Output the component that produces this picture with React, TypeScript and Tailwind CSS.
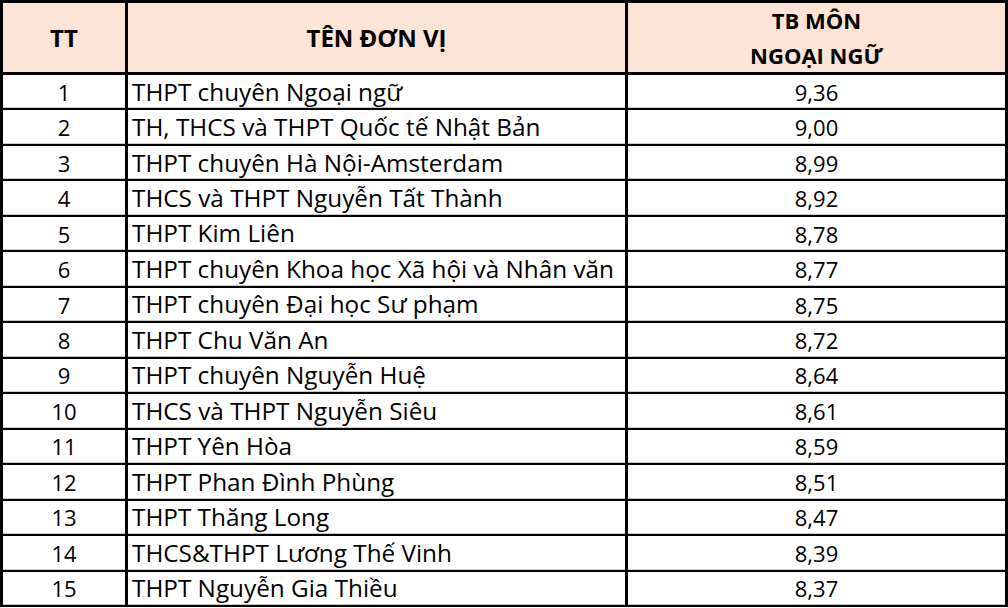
import React from "react";

interface Row {
    tt: number;
    name: string;
    score: string;
}

const rows: Row[] = [
    { tt: 1, name: "THPT chuyên Ngoại ngữ", score: "9,36" },
    { tt: 2, name: "TH, THCS và THPT Quốc tế Nhật Bản", score: "9,00" },
    { tt: 3, name: "THPT chuyên Hà Nội-Amsterdam", score: "8,99" },
    { tt: 4, name: "THCS và THPT Nguyễn Tất Thành", score: "8,92" },
    { tt: 5, name: "THPT Kim Liên", score: "8,78" },
    { tt: 6, name: "THPT chuyên Khoa học Xã hội và Nhân văn", score: "8,77" },
    { tt: 7, name: "THPT chuyên Đại học Sư phạm", score: "8,75" },
    { tt: 8, name: "THPT Chu Văn An", score: "8,72" },
    { tt: 9, name: "THPT chuyên Nguyễn Huệ", score: "8,64" },
    { tt: 10, name: "THCS và THPT Nguyễn Siêu", score: "8,61" },
    { tt: 11, name: "THPT Yên Hòa", score: "8,59" },
    { tt: 12, name: "THPT Phan Đình Phùng", score: "8,51" },
    { tt: 13, name: "THPT Thăng Long", score: "8,47" },
    { tt: 14, name: "THCS&THPT Lương Thế Vinh", score: "8,39" },
    { tt: 15, name: "THPT Nguyễn Gia Thiều", score: "8,37" },
];

export default function App() {
    return (
        <div
            className="w-[1008px] h-[608px] overflow-hidden bg-white text-black"
            style={{ fontFamily: '"Open Sans", "Noto Sans", sans-serif' }}
        >
            <div className="border-l-[3px] border-t-[3px] border-black">
                {/* header */}
                <div className="flex h-[72px] bg-[#fce4d6] border-b-[3px] border-black font-bold text-[22px] leading-[35px]">
                    <div className="w-[125px] border-r-[3px] border-black flex items-center justify-center text-[24px]">
                        TT
                    </div>
                    <div className="w-[500px] border-r-[3px] border-black flex items-center justify-center text-[24px]">
                        TÊN ĐƠN VỊ
                    </div>
                    <div className="w-[380px] border-r-[3px] border-black flex flex-col items-center justify-center">
                        <span>TB MÔN</span>
                        <span>NGOẠI NGỮ</span>
                    </div>
                </div>

                {rows.map((row) => (
                    <div
                        key={row.tt}
                        className="flex h-[35.47px] border-b-2 border-black shadow-[inset_0_-1px_0_#c8c8c8] text-[22px] leading-none"
                    >
                        <div className="w-[125px] border-r-[3px] border-black flex items-center justify-center">
                            {row.tt}
                        </div>
                        <div className="w-[500px] border-r-[3px] border-black flex items-center pl-[4px] whitespace-nowrap text-[24.3px]">
                            {row.name}
                        </div>
                        <div className="w-[380px] border-r-[3px] border-black flex items-center justify-center">
                            {row.score}
                        </div>
                    </div>
                ))}
            </div>
        </div>
    );
}
